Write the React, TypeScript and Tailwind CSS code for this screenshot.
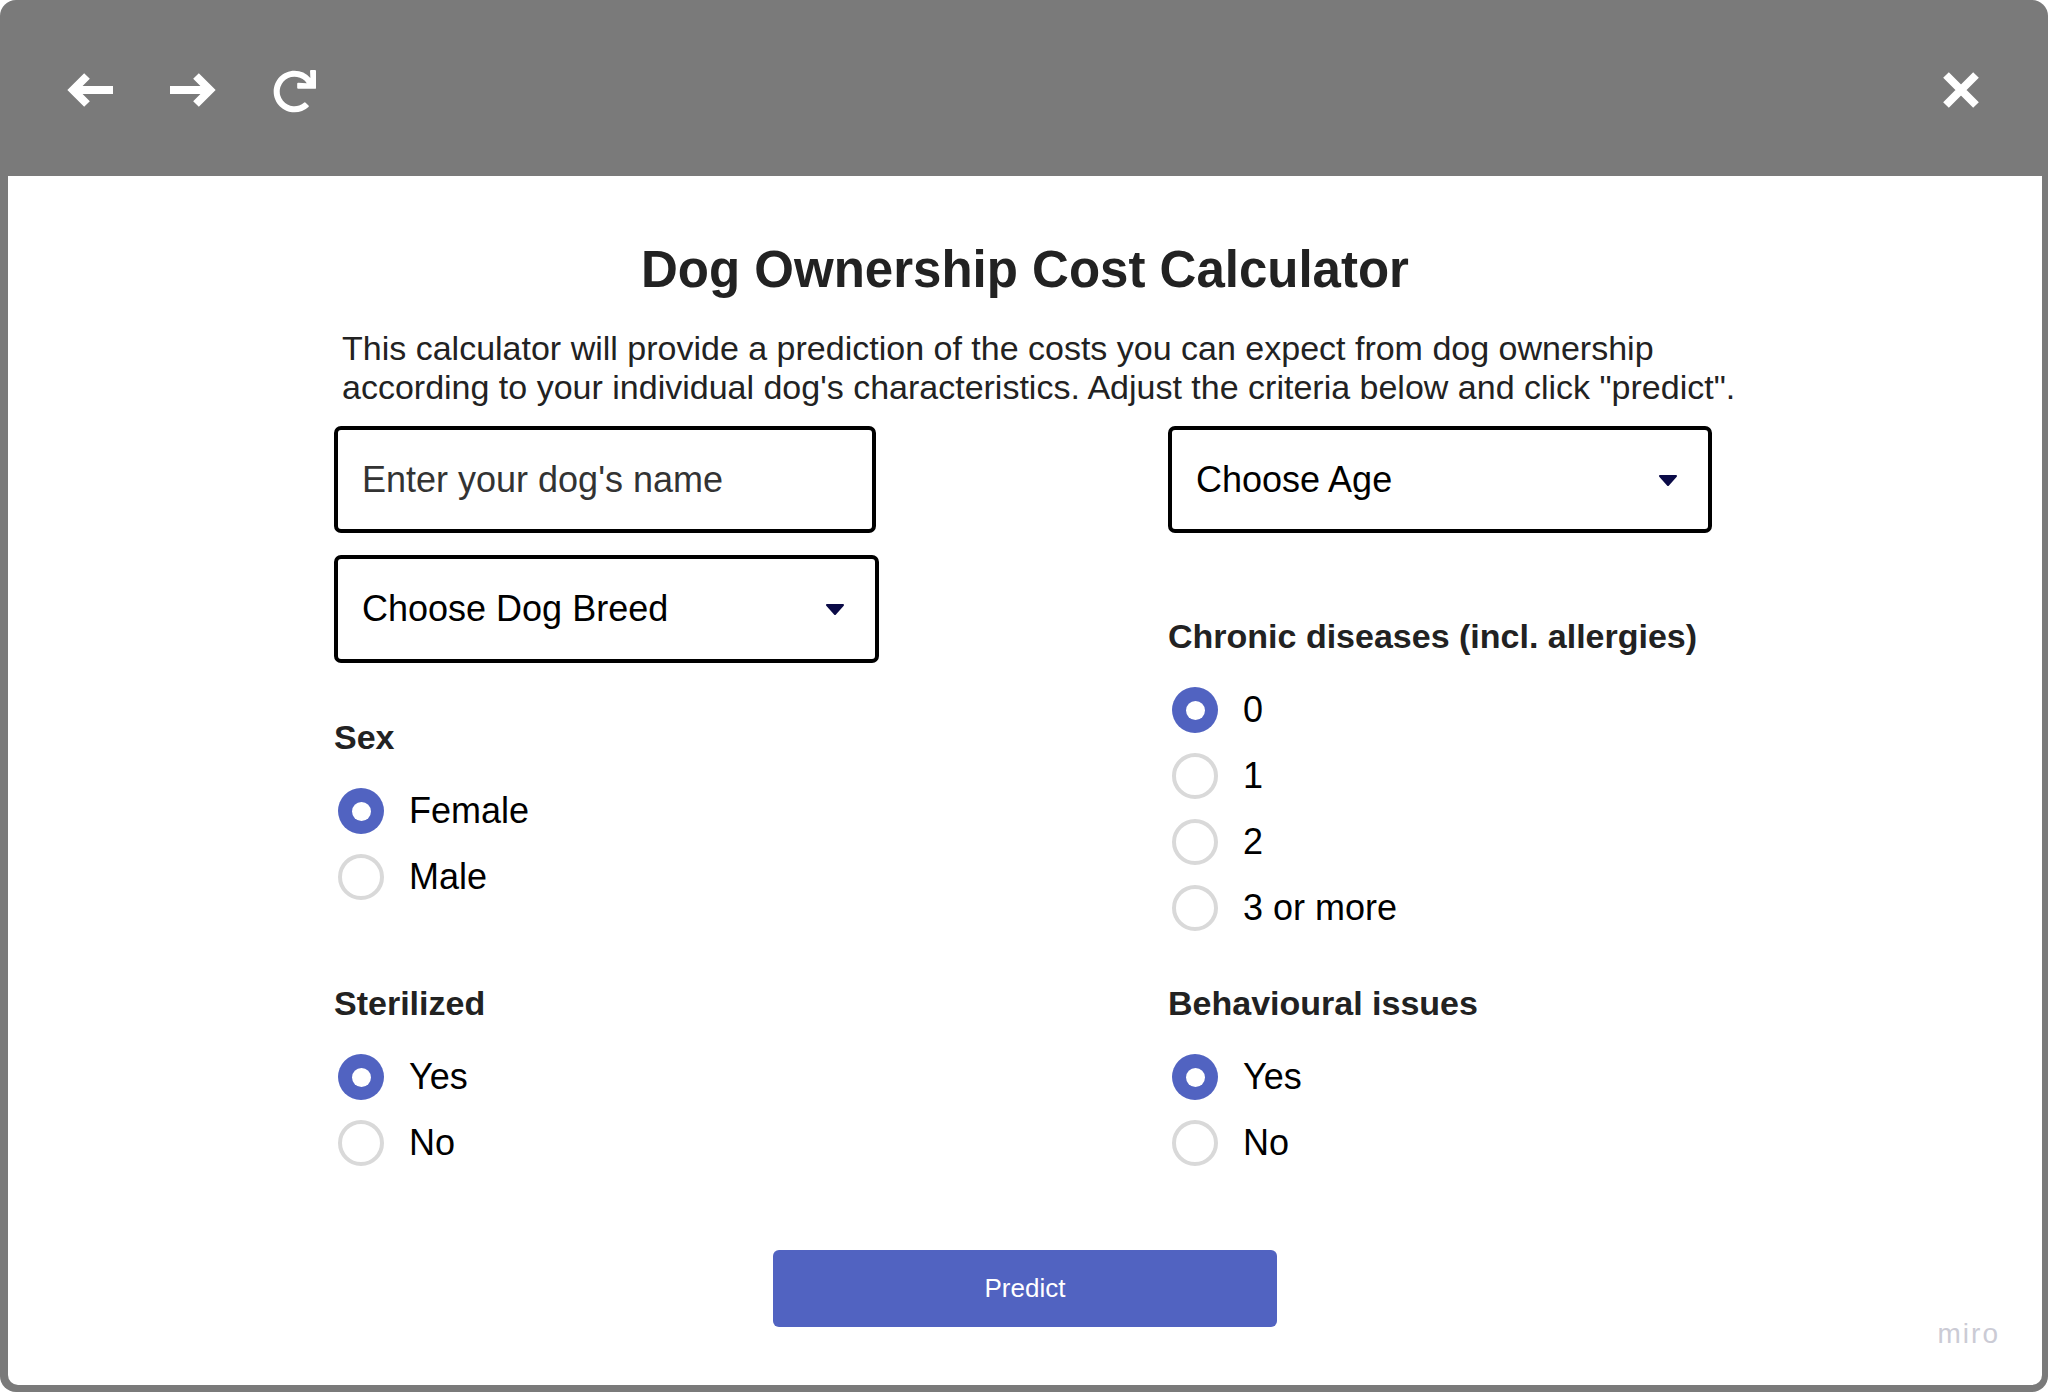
import { FaRedo } from "react-icons/fa";

// Selected index per radio group, as in the mockup
type Group = { label: string; options: string[]; selected: number };

const sex: Group = { label: "Sex", options: ["Female", "Male"], selected: 0 };
const sterilized: Group = { label: "Sterilized", options: ["Yes", "No"], selected: 0 };
const chronic: Group = {
	label: "Chronic diseases (incl. allergies)",
	options: ["0", "1", "2", "3 or more"],
	selected: 0,
};
const behaviour: Group = { label: "Behavioural issues", options: ["Yes", "No"], selected: 0 };

const BackIcon = () => (
	<svg width="48" height="38" viewBox="0 0 48 38" fill="none" aria-hidden="true">
		<path d="M48 19H9" stroke="white" strokeWidth="8" />
		<path d="M22 5L8 19l14 14" stroke="white" strokeWidth="8" strokeLinejoin="miter" />
	</svg>
);

const ForwardIcon = () => (
	<svg width="48" height="38" viewBox="0 0 48 38" fill="none" aria-hidden="true">
		<path d="M0 19H39" stroke="white" strokeWidth="8" />
		<path d="M26 5l14 14-14 14" stroke="white" strokeWidth="8" strokeLinejoin="miter" />
	</svg>
);

const CloseIcon = () => (
	<svg width="38" height="38" viewBox="0 0 38 38" fill="none" aria-hidden="true">
		<path d="M4 4l30 30M34 4L4 34" stroke="white" strokeWidth="8" />
	</svg>
);

const Caret = () => (
	<svg width="20" height="12" viewBox="0 0 20 12" aria-hidden="true">
		<path
			d="M2 2h16l-8 9z"
			fill="#0b0b47"
			stroke="#0b0b47"
			strokeWidth="2"
			strokeLinejoin="round"
		/>
	</svg>
);

const Radio = ({ checked }: { checked: boolean }) =>
	checked ? (
		<span className="flex h-[46px] w-[46px] shrink-0 items-center justify-center rounded-full bg-[#5163c1]">
			<span className="h-[19px] w-[19px] rounded-full bg-white" />
		</span>
	) : (
		<span className="h-[46px] w-[46px] shrink-0 rounded-full border-[4px] border-[#d9d9d9] bg-white" />
	);

const RadioGroup = ({ group, className = "" }: { group: Group; className?: string }) => (
	<div className={className}>
		<h3 className="font-bold text-[#222] text-[34px] leading-[40px]">{group.label}</h3>
		<ul className="mt-[21px]">
			{group.options.map((opt, i) => (
				<li key={opt} className="flex h-[66px] items-center gap-[25px] pl-[4px]">
					<Radio checked={i === group.selected} />
					<span className="text-[36px] text-black leading-none">{opt}</span>
				</li>
			))}
		</ul>
	</div>
);

const SelectBox = ({ label, className = "" }: { label: string; className?: string }) => (
	<div
		className={`flex items-center justify-between rounded-[7px] border-[4px] border-black bg-white pr-[30px] pl-[24px] ${className}`}
	>
		<span className="text-[36px] text-black">{label}</span>
		<Caret />
	</div>
);

export default function App() {
	return (
		<div className="h-[1392px] w-[2048px] bg-white font-['Liberation_Sans',Arial,sans-serif]">
			<div className="flex h-full flex-col rounded-[16px] bg-[#7a7a7a]">
				{/* browser chrome */}
				<div className="flex h-[176px] shrink-0 items-center pt-[4px] pr-[68px] pl-[65px]">
					<BackIcon />
					<span className="ml-[57px]">
						<ForwardIcon />
					</span>
					<FaRedo className="mt-[3px] ml-[55px] text-white" size={43} />
					<span className="ml-auto">
						<CloseIcon />
					</span>
				</div>

				<div className="relative mr-[6px] mb-[7px] ml-[8px] flex-1 rounded-b-[10px] bg-white">
					<div className="mx-auto w-[1382px] pt-[64px]">
						<h1 className="text-center font-bold text-[#222] text-[51px] leading-[60px]">
							Dog Ownership Cost Calculator
						</h1>
						<p className="mt-[29px] ml-[8px] w-[1440px] text-[#222] text-[34px] leading-[39px]">
							This calculator will provide a prediction of the costs you can expect from dog
							ownership according to your individual dog's characteristics. Adjust the criteria
							below and click "predict".
						</p>

						<div className="mt-[19px] grid grid-cols-[545px_548px] justify-between gap-y-[42px]">
							<div>
								<input
									type="text"
									placeholder="Enter your dog's name"
									className="h-[107px] w-[542px] rounded-[7px] border-[4px] border-black bg-white px-[24px] text-[36px] text-black outline-none placeholder:text-[#333]"
								/>
								<SelectBox label="Choose Dog Breed" className="mt-[22px] h-[108px] w-[545px]" />
								<RadioGroup group={sex} className="mt-[54px]" />
							</div>
							<div>
								<SelectBox label="Choose Age" className="h-[107px] w-[544px]" />
								<RadioGroup group={chronic} className="mt-[83px]" />
							</div>
							<RadioGroup group={sterilized} />
							<RadioGroup group={behaviour} />
						</div>

						<button
							type="button"
							className="mx-auto mt-[74px] flex h-[77px] w-[504px] items-center justify-center rounded-[6px] bg-[#5163c1] text-[26px] text-white"
						>
							Predict
						</button>
					</div>

					<span className="absolute right-[42px] bottom-[30px] text-[#cbcbd5] text-[28px] tracking-[2px]">
						miro
					</span>
				</div>
			</div>
		</div>
	);
}
